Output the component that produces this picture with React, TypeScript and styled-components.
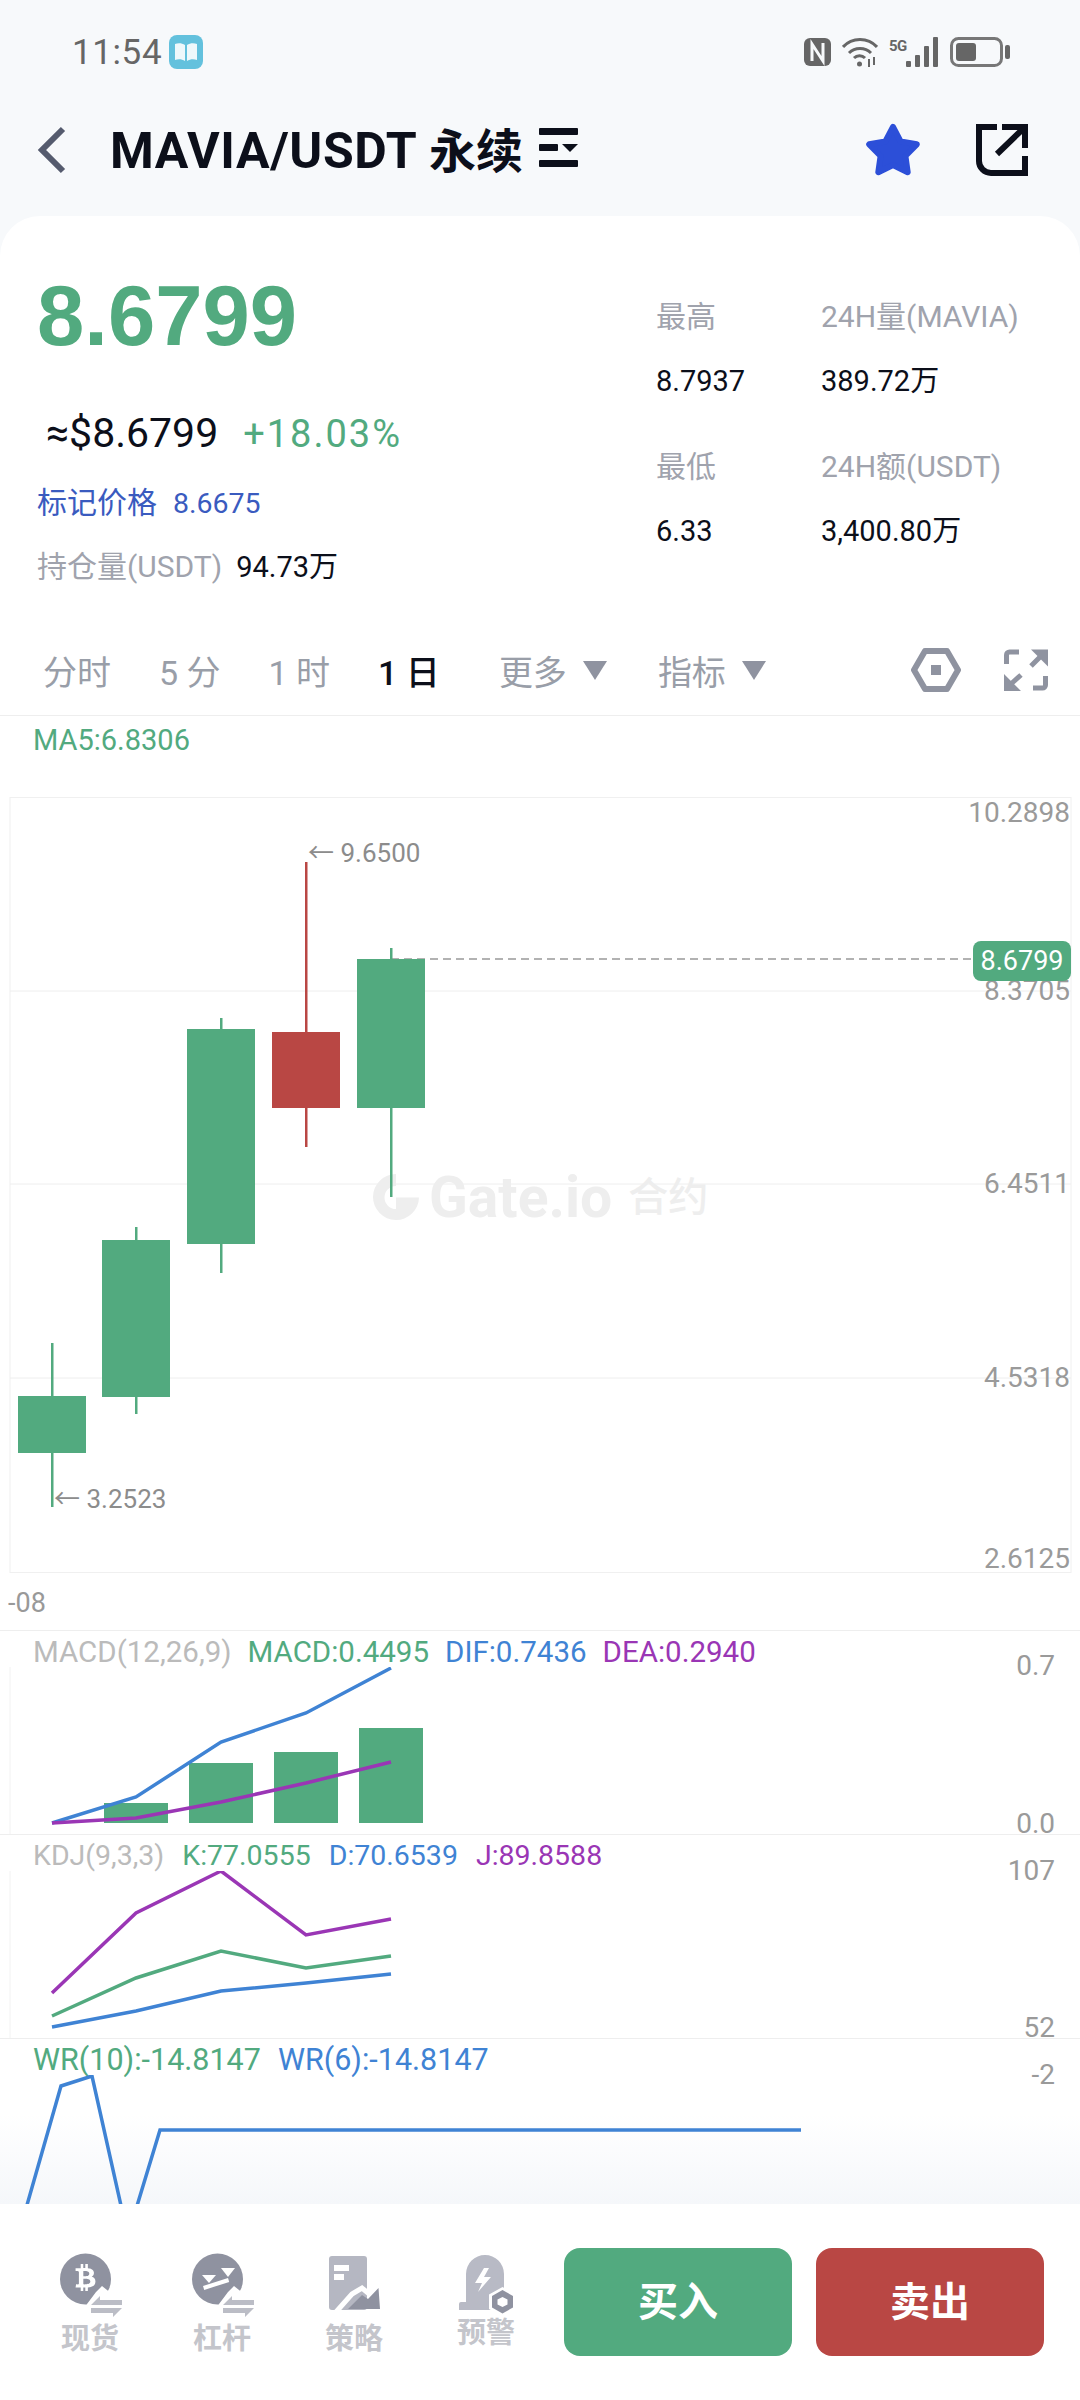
import styled, { createGlobalStyle } from "styled-components";
import { FaBtc } from "react-icons/fa";

const GREEN = "#52aa7f";
const RED = "#b94744";
const BLUE = "#3f83d4";
const PURPLE = "#9a36b5";
const FONT = `Roboto, "Noto Sans CJK SC", sans-serif`;

const candles = [
  { x: 52, open: 1396, close: 1453, high: 1343, low: 1507, up: true },
  { x: 136, open: 1240, close: 1397, high: 1227, low: 1414, up: true },
  { x: 221, open: 1029, close: 1244, high: 1018, low: 1273, up: true },
  { x: 306, open: 1032, close: 1108, high: 862, low: 1147, up: false },
  { x: 391, open: 959, close: 1108, high: 948, low: 1197, up: true },
];

const CANDLE_X = [52, 136, 221, 306, 391];

const toPoints = (ys: number[]) =>
  ys.map((y, i) => `${CANDLE_X[i]},${y}`).join(" ");

export default function App() {
  return (
    <Page>
      <GlobalStyle />
      <StatusBar>
        <Clock>11:54</Clock>
        <BookBadge viewBox="0 0 34 34">
          <rect width="34" height="34" rx="8" fill="#63c1dd" />
          <path d="M16 10C13 8 9 8 6 9v16c3-1 7-1 10 1zM18 10c3-2 7-2 10-1v16c-3-1-7-1-10 1z" fill="#eef8fb" />
        </BookBadge>
        <StatusIcons>
          <svg width="27" height="28" viewBox="0 0 27 28">
            <rect width="27" height="28" rx="6" fill="#666" />
            <path d="M8 23V6l11 17V5" fill="none" stroke="#f7f9fb" strokeWidth="3" />
          </svg>
          <svg width="36" height="30" viewBox="0 0 36 30" fill="none" stroke="#666" strokeWidth="3">
            <path d="M1 10c9-10 25-10 34 0" />
            <path d="M7 16c6-6 16-6 22 0" />
            <path d="M12 21c3-3 8-3 11 0" />
            <circle cx="17.500" cy="27" r="2.500" fill="#666" stroke="none" />
            <path d="M27 22v8M32 20v8" strokeWidth="2" />
          </svg>
          <SignalIcon width="50" height="30" viewBox="0 0 50 30">
            <text x="0" y="14">5G</text>
            <rect x="17" y="24" width="5" height="6" rx="1" fill="#666" />
            <rect x="26" y="18" width="5" height="12" rx="1" fill="#666" />
            <rect x="35" y="9" width="5" height="21" rx="1" fill="#666" />
            <rect x="44" y="0" width="5" height="30" rx="1" fill="#666" />
          </SignalIcon>
          <svg width="60" height="30" viewBox="0 0 60 30">
            <rect x="1.500" y="1.500" width="50" height="27" rx="7" fill="none" stroke="#777" strokeWidth="3" />
            <rect x="6" y="6" width="20" height="18" rx="3" fill="#666" />
            <rect x="55" y="8" width="5" height="14" rx="2" fill="#666" />
          </svg>
        </StatusIcons>
      </StatusBar>

      <Header>
        <svg width="30" height="48" viewBox="0 0 30 48">
          <path d="M26 3L5 24l21 21" fill="none" stroke="#555b6e" strokeWidth="6" />
        </svg>
        <Title>
          MAVIA/USDT <TitleSuffix>永续</TitleSuffix>
        </Title>
        <PairMenu width="39" height="39" viewBox="0 0 39 39">
          <rect width="39" height="7" rx="1" fill="#0c0f1a" />
          <rect y="16" width="19" height="7" rx="1" fill="#0c0f1a" />
          <path d="M23 16h16l-8 8z" fill="#0c0f1a" />
          <rect y="32" width="39" height="7" rx="1" fill="#0c0f1a" />
        </PairMenu>
        <HeaderActions>
          <svg width="56" height="56" viewBox="0 0 56 56">
            <polygon
              points="28,5 35.600,19.500 51.800,22.300 40.400,34 42.700,50.200 28,43 13.300,50.200 15.600,34 4.200,22.300 20.400,19.500"
              fill="#2c4fd8"
              stroke="#2c4fd8"
              strokeWidth="6"
              strokeLinejoin="round"
            />
          </svg>
          <svg width="52" height="52" viewBox="0 0 52 52" fill="none" stroke="#0c0f1a" strokeWidth="6">
            <path d="M26 3h23v21M49 3L21 30" />
            <path d="M21 3H3v34a12 12 0 0 0 12 12h34V32" />
          </svg>
        </HeaderActions>
      </Header>

      <Card>
        <Summary>
          <PriceColumn>
            <LastPrice>8.6799</LastPrice>
            <SubPrice>
              <span>≈$8.6799</span>
              <Change>+18.03%</Change>
            </SubPrice>
            <MarkRow>
              <span>标记价格</span>
              <MarkValue>8.6675</MarkValue>
            </MarkRow>
            <OpenRow>
              <span>持仓量(USDT)</span>
              <OpenValue>94.73万</OpenValue>
            </OpenRow>
          </PriceColumn>
          <StatColumn>
            <StatGroup>
              <StatLabel>最高</StatLabel>
              <StatLabel>24H量(MAVIA)</StatLabel>
              <StatValue>8.7937</StatValue>
              <StatValue>389.72万</StatValue>
            </StatGroup>
            <StatGroup>
              <StatLabel>最低</StatLabel>
              <StatLabel>24H额(USDT)</StatLabel>
              <StatValue>6.33</StatValue>
              <StatValue>3,400.80万</StatValue>
            </StatGroup>
          </StatColumn>
        </Summary>

        <TabBar>
          <TimeTabs>
            <TimeTab>分时</TimeTab>
            <TimeTab>5 分</TimeTab>
            <TimeTab>1 时</TimeTab>
            <TimeTab $active>1 日</TimeTab>
          </TimeTabs>
          <MenuTabs>
            <TimeTab>
              更多
              <Caret />
            </TimeTab>
            <TimeTab>
              指标
              <Caret />
            </TimeTab>
          </MenuTabs>
          <TabIcons>
            <svg width="50" height="44" viewBox="0 0 50 44">
              <path d="M14 3h22l11 19-11 19H14L3 22z" fill="none" stroke="#8f93a0" strokeWidth="6" strokeLinejoin="round" />
              <rect x="20" y="17" width="10" height="10" fill="#8f93a0" />
            </svg>
            <svg width="44" height="44" viewBox="0 0 44 44" fill="none" stroke="#8f93a0" strokeWidth="5">
              <path d="M2.500 16V7a3 3 0 0 1 3-3H15" />
              <path d="M41.500 28v9a3 3 0 0 1-3 3H29" />
              <path d="M27 18l9-9M17 27l-9 8" />
              <path d="M27 1.500h17v17zM0 26l17 17H0z" fill="#8f93a0" stroke="none" />
            </svg>
          </TabIcons>
        </TabBar>

        <ChartArea>
          <MaLegend>MA5:6.8306</MaLegend>
          <PriceChart>
            <Watermark>
              <svg width="46" height="47" viewBox="0 0 46 47">
                <path d="M23 0a23 23 0 1 0 23 23.500H23V35a11.500 11.500 0 1 1 0-23z" fill="#eeeeee" />
              </svg>
              <span>Gate.io</span>
              <WatermarkCn>合约</WatermarkCn>
            </Watermark>
            <CanvasSvg width="1080" height="776" viewBox="0 797 1080 776">
              <rect x="10" y="797.500" width="1061" height="775" fill="none" stroke="#f0f0f0" />
              {[991, 1184, 1378].map((y) => (
                <line key={y} x1="10" x2="1071" y1={y} y2={y} stroke="#eeeeee" />
              ))}
              <line x1="391" x2="975" y1="959" y2="959" stroke="#999" strokeWidth="1.500" strokeDasharray="8 5" />
              {candles.map((c) => {
                const color = c.up ? GREEN : RED;
                return (
                  <g key={c.x} fill={color}>
                    <rect x={c.x - 1} y={c.high} width="2.500" height={c.low - c.high} />
                    <rect x={c.x - 34} y={c.open} width="68" height={c.close - c.open} />
                  </g>
                );
              })}
            </CanvasSvg>
            <ExtremeLabel $left={308} $y={56}>← 9.6500</ExtremeLabel>
            <ExtremeLabel $left={54} $y={702}>← 3.2523</ExtremeLabel>
            <AxisLabel $right={10} $y={16}>10.2898</AxisLabel>
            <AxisLabel $right={10} $y={194}>8.3705</AxisLabel>
            <AxisLabel $right={10} $y={387}>6.4511</AxisLabel>
            <AxisLabel $right={10} $y={581}>4.5318</AxisLabel>
            <AxisLabel $right={10} $y={762}>2.6125</AxisLabel>
            <LastTag>8.6799</LastTag>
          </PriceChart>
          <TimeRow>-08</TimeRow>

          <IndicatorPanel>
            <Legend $size={29.5} $gap={16}>
              <LegendItem $color="#bbbbbb">MACD(12,26,9)</LegendItem>
              <LegendItem $color={GREEN}>MACD:0.4495</LegendItem>
              <LegendItem $color={BLUE}>DIF:0.7436</LegendItem>
              <LegendItem $color={PURPLE}>DEA:0.2940</LegendItem>
            </Legend>
            <svg width="1080" height="168" viewBox="0 1668 1080 168" fill="none" strokeWidth="3.500">
              <line x1="10" x2="10" y1="1668" y2="1836" stroke="#f2f2f2" strokeWidth="1" />
              {[
                [104, 1804],
                [189, 1764],
                [274, 1753],
                [359, 1729],
              ].map(([x, top]) => (
                <rect key={x} x={x} y={top} width="64" height={1824 - top} fill={GREEN} stroke="none" />
              ))}
              <polyline points={toPoints([1824, 1798, 1743, 1714, 1669])} stroke={BLUE} />
              <polyline points={toPoints([1824, 1819, 1803, 1784, 1763])} stroke={PURPLE} />
            </svg>
            <AxisLabel $right={25} $y={35}>0.7</AxisLabel>
            <AxisLabel $right={25} $y={193}>0.0</AxisLabel>
          </IndicatorPanel>

          <IndicatorPanel>
            <Legend $size={28.5} $gap={18}>
              <LegendItem $color="#bbbbbb">KDJ(9,3,3)</LegendItem>
              <LegendItem $color={GREEN}>K:77.0555</LegendItem>
              <LegendItem $color={BLUE}>D:70.6539</LegendItem>
              <LegendItem $color={PURPLE}>J:89.8588</LegendItem>
            </Legend>
            <svg width="1080" height="168" viewBox="0 1873 1080 168" fill="none" strokeWidth="3.500">
              <line x1="10" x2="10" y1="1873" y2="2041" stroke="#f2f2f2" strokeWidth="1" />
              <polyline points={toPoints([1995, 1915, 1873, 1937, 1921])} stroke={PURPLE} />
              <polyline points={toPoints([2018, 1980, 1953, 1970, 1958])} stroke={GREEN} />
              <polyline points={toPoints([2029, 2013, 1993, 1985, 1976])} stroke={BLUE} />
            </svg>
            <AxisLabel $right={25} $y={36}>107</AxisLabel>
            <AxisLabel $right={25} $y={193}>52</AxisLabel>
          </IndicatorPanel>

          <IndicatorPanel>
            <Legend $size={30.5} $gap={17}>
              <LegendItem $color={GREEN}>WR(10):-14.8147</LegendItem>
              <LegendItem $color={BLUE}>WR(6):-14.8147</LegendItem>
            </Legend>
            <svg width="1080" height="168" viewBox="0 2078 1080 168" fill="none" stroke={BLUE} strokeWidth="3.500">
              <polyline points="23,2222 61,2089 92,2079 124,2222" />
              <polyline points="133,2222 160,2133 801,2133" />
            </svg>
            <AxisLabel $right={25} $y={36}>-2</AxisLabel>
          </IndicatorPanel>
        </ChartArea>

        <BottomBar>
          <NavItem>
            <svg width="80" height="72" viewBox="0 0 80 72">
              <circle cx="35.500" cy="29" r="25.500" fill="#8f92a0" />
              <FaBtc x="22" y="14" size="27" color="#fff" />
              <polygon points="37,54 46,42 52,36 62,44 75,44 75,72 37,72" fill="#fff" />
              <polygon points="41,55 50,46 50,50 72,50 72,55" fill="#bbbdc6" />
              <polygon points="41,58 72,58 63,67 63,63 41,63" fill="#bbbdc6" />
            </svg>
            <NavLabel>现货</NavLabel>
          </NavItem>
          <NavItem>
            <svg width="80" height="72" viewBox="0 0 80 72">
              <circle cx="35.500" cy="29" r="25.500" fill="#8f92a0" />
              <polygon points="20,25 34,25 27,33" fill="#fff" />
              <polygon points="39,18 53,18 46,27" fill="#fff" />
              <line x1="21.600" y1="38" x2="46.600" y2="30" stroke="#fff" strokeWidth="4" />
              <polygon points="37,54 46,42 52,36 62,44 75,44 75,72 37,72" fill="#fff" />
              <polygon points="41,55 50,46 50,50 72,50 72,55" fill="#bbbdc6" />
              <polygon points="41,58 72,58 63,67 63,63 41,63" fill="#bbbdc6" />
            </svg>
            <NavLabel>杠杆</NavLabel>
          </NavItem>
          <NavItem>
            <svg width="80" height="72" viewBox="0 0 80 72">
              <rect x="15" y="6" width="38" height="54" rx="3" fill="#b5b7c2" />
              <rect x="20" y="15" width="15" height="6" fill="#fff" />
              <rect x="20" y="24" width="10" height="6" fill="#fff" />
              <polyline points="22,62 38,44 48,38 54,43 66,30" fill="none" stroke="#fff" strokeWidth="5" />
              <polygon points="34,59 48,45 54,49 64.500,38 66,59" fill="#8f92a0" />
            </svg>
            <NavLabel>策略</NavLabel>
          </NavItem>
          <NavItem>
            <svg width="80" height="72" viewBox="0 0 80 72">
              <path d="M20 52V24a19 19 0 0 1 38 0v36H13v-6a2 2 0 0 1 2-2z" fill="#b8bac5" />
              <polygon points="38,18 29,33 36,33 32,42 45,27 38,27 43,18" fill="#fff" />
              <polygon points="56.500,37 70,44.500 70,59 56.500,66.500 43,59 43,44.500" fill="#fff" />
              <polygon points="56.500,40 67,46 67,57.500 56.500,63.500 46,57.500 46,46" fill="#8f92a0" />
              <polygon points="56.500,47 61.500,49.500 61.500,54.500 56.500,57 51.500,54.500 51.500,49.500" fill="#fff" />
            </svg>
            <NavLabel $raised>预警</NavLabel>
          </NavItem>
          <TradeButtons>
            <TradeButton $color={GREEN}>买入</TradeButton>
            <TradeButton $color={RED}>卖出</TradeButton>
          </TradeButtons>
        </BottomBar>
      </Card>
    </Page>
  );
}

const GlobalStyle = createGlobalStyle`
  html, body {
    margin: 0;
    padding: 0;
    background: #f7f9fb;
  }
  * {
    box-sizing: border-box;
  }
  svg {
    display: block;
    flex-shrink: 0;
  }
`;

const Page = styled.div`
  display: flex;
  flex-direction: column;
  width: 1080px;
  height: 2400px;
  overflow: hidden;
  background: #f7f9fb;
  font-family: ${FONT};
`;

const StatusBar = styled.div`
  display: flex;
  align-items: center;
  height: 104px;
  padding: 0 70px 0 72px;
`;

const Clock = styled.span`
  color: #666;
  font-size: 35px;
  letter-spacing: 0.6px;
`;

const BookBadge = styled.svg`
  width: 34px;
  height: 34px;
  margin-left: 7px;
`;

const StatusIcons = styled.div`
  display: flex;
  align-items: center;
  gap: 11px;
  margin-left: auto;
`;

const SignalIcon = styled.svg`
  overflow: visible;

  text {
    fill: #666;
    font-family: ${FONT};
    font-size: 15px;
    font-weight: 700;
    letter-spacing: -0.5px;
  }
`;

const Header = styled.header`
  display: flex;
  align-items: center;
  height: 92px;
  margin-bottom: 20px;
  padding: 0 52px 0 37px;
`;

const Title = styled.h1`
  margin: 0 16px 6px 43px;
  color: #0c0f1a;
  font-size: 50px;
  font-weight: 700;
  letter-spacing: 0.6px;
  white-space: nowrap;
`;

const TitleSuffix = styled.span`
  font-size: 47px;
  letter-spacing: 0;
`;

const PairMenu = styled.svg`
  margin-bottom: 6px;
`;

const HeaderActions = styled.div`
  display: flex;
  align-items: center;
  gap: 55px;
  margin-left: auto;
`;

const Card = styled.main`
  display: flex;
  flex: 1;
  flex-direction: column;
  min-height: 0;
  border-radius: 40px 40px 0 0;
  background: #fff;
`;

const Summary = styled.section`
  display: flex;
  justify-content: space-between;
  height: 424px;
  padding: 0 0 0 37px;
`;

const PriceColumn = styled.div`
  display: flex;
  flex-direction: column;
`;

const LastPrice = styled.div`
  height: 80px;
  margin-top: 60px;
  color: ${GREEN};
  font-family: "Liberation Sans", sans-serif;
  font-size: 85px;
  font-weight: 700;
  line-height: 80px;
`;

const SubPrice = styled.div`
  display: flex;
  align-items: baseline;
  gap: 25px;
  height: 44px;
  margin: 55px 0 0 9px;
  color: #0c0f1a;
  font-size: 41px;
  line-height: 44px;
`;

const Change = styled.span`
  color: ${GREEN};
  font-size: 38px;
  letter-spacing: 2px;
`;

const MarkRow = styled.div`
  display: flex;
  align-items: baseline;
  gap: 16px;
  height: 40px;
  margin-top: 28px;
  color: #3a5bbf;
  font-size: 30px;
  line-height: 40px;
`;

const MarkValue = styled.span`
  font-size: 28.500px;
`;

const OpenRow = styled.div`
  display: flex;
  align-items: baseline;
  gap: 14px;
  height: 40px;
  margin-top: 24px;
  color: #a0a3ad;
  font-size: 30px;
  line-height: 40px;
`;

const OpenValue = styled.span`
  color: #0c0f1a;
  font-size: 29px;
`;

const StatColumn = styled.div`
  display: flex;
  flex-direction: column;
  gap: 46px;
  width: 424px;
  padding-top: 81px;
`;

const StatGroup = styled.div`
  display: grid;
  grid-template-columns: 165px auto;
  row-gap: 24px;
`;

const StatLabel = styled.span`
  height: 40px;
  color: #a0a3ad;
  font-size: 30px;
  line-height: 40px;
`;

const StatValue = styled.span`
  height: 40px;
  color: #0c0f1a;
  font-size: 29px;
  line-height: 40px;
`;

const TabBar = styled.nav`
  display: flex;
  align-items: center;
  height: 76px;
  padding: 0 32px 15px 43px;
  border-bottom: 1px solid #eeeeee;
`;

const TimeTabs = styled.div`
  display: flex;
  gap: 48px;
`;

const MenuTabs = styled.div`
  display: flex;
  gap: 51px;
  margin-left: 59px;
`;

const TimeTab = styled.span<{ $active?: boolean }>`
  display: flex;
  align-items: center;
  gap: 16px;
  color: ${(props) => (props.$active ? "#0c0f1a" : "#999ea8")};
  font-size: 34px;
  font-weight: ${(props) => (props.$active ? 500 : 400)};
  white-space: pre;
`;

const Caret = styled.i`
  width: 0;
  height: 0;
  border-top: 19px solid #8f93a0;
  border-right: 12px solid transparent;
  border-left: 12px solid transparent;
`;

const TabIcons = styled.div`
  display: flex;
  align-items: center;
  gap: 43px;
  margin-left: auto;
`;

const ChartArea = styled.section`
  flex: 1;
  min-height: 0;
  overflow: hidden;
  background: linear-gradient(to bottom, #fff calc(100% - 90px), #f5f7fa);
`;

const MaLegend = styled.div`
  height: 81px;
  padding: 6px 0 0 33px;
  color: ${GREEN};
  font-size: 29px;
  line-height: 36px;
`;

const PriceChart = styled.div`
  position: relative;
  height: 776px;
`;

const CanvasSvg = styled.svg`
  position: relative;
`;

const Watermark = styled.div`
  position: absolute;
  top: 377px;
  left: 373px;
  display: flex;
  align-items: center;
  gap: 10px;
  color: #eeeeee;
  font-size: 57px;
  font-weight: 700;
  line-height: 47px;
`;

const WatermarkCn = styled.span`
  margin-left: 6px;
  font-size: 40px;
  font-weight: 500;
`;

const AxisLabel = styled.span<{ $right: number; $y: number }>`
  position: absolute;
  top: ${(props) => props.$y}px;
  right: ${(props) => props.$right}px;
  color: #9a9a9a;
  font-size: 28px;
  line-height: 1;
  transform: translateY(-50%);
`;

const ExtremeLabel = styled.span<{ $left: number; $y: number }>`
  position: absolute;
  top: ${(props) => props.$y}px;
  left: ${(props) => props.$left}px;
  color: #8c8c8c;
  font-size: 26px;
  line-height: 1;
  white-space: nowrap;
  transform: translateY(-50%);
`;

const LastTag = styled.span`
  position: absolute;
  top: 144px;
  left: 973px;
  width: 98px;
  height: 40px;
  border-radius: 8px;
  background: ${GREEN};
  color: #fff;
  font-size: 27px;
  line-height: 40px;
  text-align: center;
`;

const TimeRow = styled.div`
  height: 57px;
  padding: 12px 0 0 8px;
  color: #999;
  font-size: 27px;
  line-height: 36px;
`;

const IndicatorPanel = styled.div`
  position: relative;
  height: 204px;
  border-top: 1px solid #eeeeee;
`;

const Legend = styled.div<{ $size: number; $gap: number }>`
  display: flex;
  gap: ${(props) => props.$gap}px;
  height: 36px;
  padding-left: 33px;
  font-size: ${(props) => props.$size}px;
  line-height: 42px;
`;

const LegendItem = styled.span<{ $color: string }>`
  color: ${(props) => props.$color};
  white-space: nowrap;
`;

const BottomBar = styled.footer`
  display: flex;
  align-items: flex-start;
  height: 196px;
  padding: 46px 36px 0 24px;
  background: #fff;
`;

const NavItem = styled.div`
  display: flex;
  flex-direction: column;
  align-items: center;
  width: 132px;
`;

const NavLabel = styled.span<{ $raised?: boolean }>`
  margin-top: ${(props) => (props.$raised ? "-7px" : "-1px")};
  color: #c4c5cb;
  font-size: 29px;
  font-weight: 700;
  line-height: 36px;
`;

const TradeButtons = styled.div`
  display: flex;
  gap: 24px;
  margin: -2px 0 0 12px;
`;

const TradeButton = styled.button<{ $color: string }>`
  width: 228px;
  height: 108px;
  padding: 0 0 6px;
  border: 0;
  border-radius: 16px;
  background: ${(props) => props.$color};
  color: #fff;
  font-family: ${FONT};
  font-size: 40px;
  font-weight: 700;
`;
